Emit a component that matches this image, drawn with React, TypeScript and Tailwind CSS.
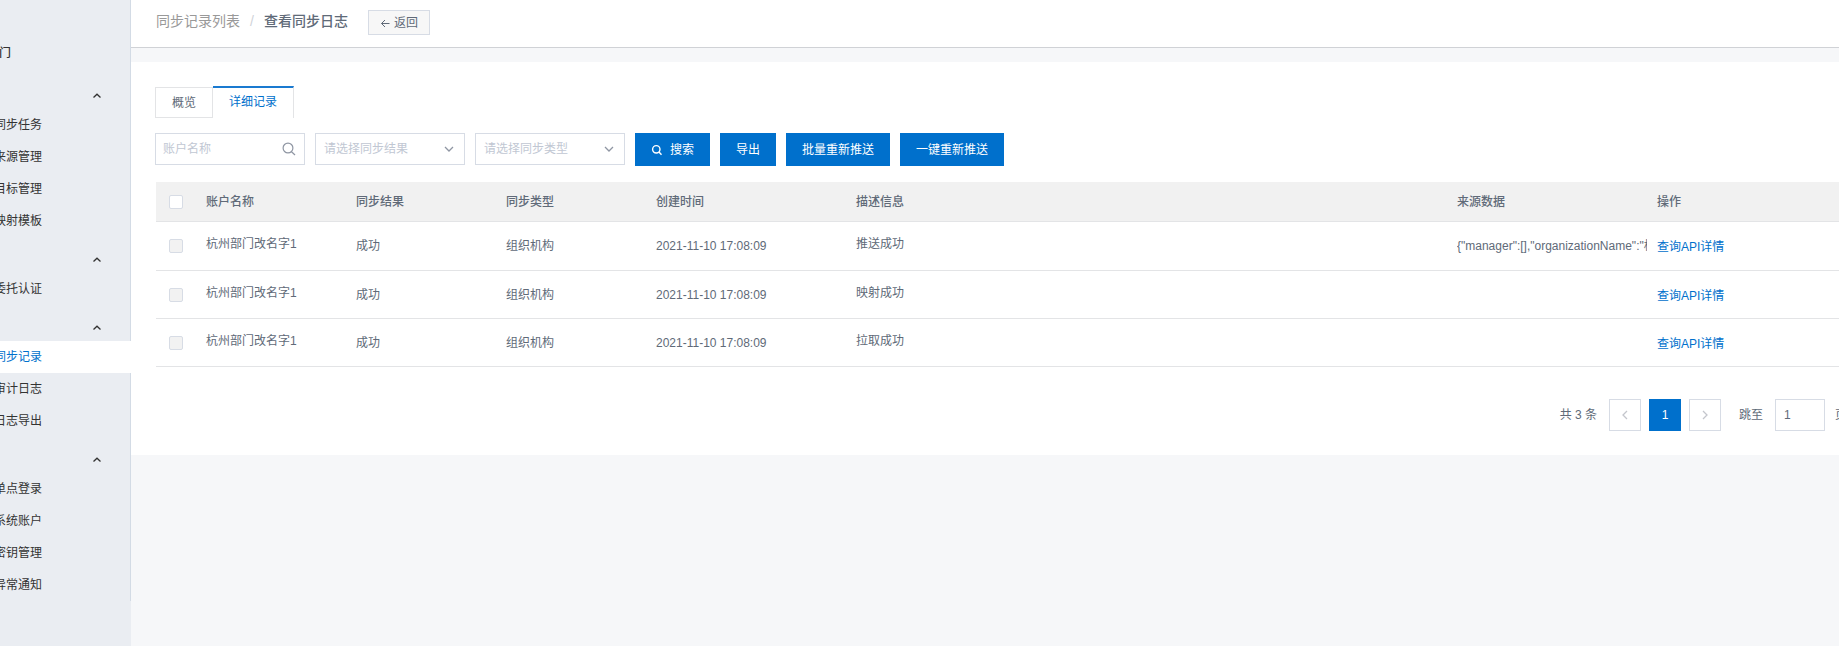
import React from "react";

const groups: { title: string; items: string[] }[] = [
  { title: "同步", items: ["同步任务", "来源管理", "目标管理", "映射模板"] },
  { title: "认证", items: ["委托认证"] },
  { title: "日志", items: ["同步记录", "审计日志", "日志导出"] },
  { title: "设置", items: ["单点登录", "系统账户", "密钥管理", "异常通知"] },
];

const rows = [
  { name: "杭州部门改名字1", desc: "推送成功", data: '{"manager":[],"organizationName":"杭州部门改名字1"}' },
  { name: "杭州部门改名字1", desc: "映射成功", data: "" },
  { name: "杭州部门改名字1", desc: "拉取成功", data: "" },
];

const primary = "flex h-[33px] items-center bg-[#0070cc] px-4 text-white";
const pager = "flex size-8 items-center justify-center border border-[#d7dce5] text-[#c4c6cc]";

function Chevron({ d, className }: { d: string; className: string }) {
  return (
    <svg viewBox="0 0 10 10" fill="none" stroke="currentColor" className={className} aria-hidden="true">
      <path d={d} />
    </svg>
  );
}

function Sidebar() {
  return (
    <aside className="w-[131px] shrink-0 overflow-hidden bg-[#eaedf2] text-[#333]">
      <nav className="h-[601px]">
        <div className="flex h-[73px] items-end border-r border-[#d3dbe5] pb-3">
          <a href="#" className="-ml-[13px] font-medium">部门</a>
        </div>
        {groups.map((g) => (
          <section key={g.title}>
            <button
              aria-label={g.title}
              className="flex h-9 w-full items-center justify-end border-r border-[#d3dbe5] pt-2.5 pr-7"
            >
              <Chevron d="M1.5 6.5 L5 3.2 L8.5 6.5" className="size-2.5 stroke-[1.3]" />
            </button>
            {g.items.map((t) => (
              <a
                key={t}
                href="#"
                className={
                  t === "同步记录"
                    ? "flex h-8 items-center bg-white text-[#0070cc]"
                    : "flex h-8 items-center border-r border-[#d3dbe5]"
                }
              >
                <span className="-ml-1.5">{t}</span>
              </a>
            ))}
          </section>
        ))}
      </nav>
    </aside>
  );
}

function Select({ label }: { label: string }) {
  return (
    <div className="relative w-[150px]">
      <select
        aria-label={label}
        className="h-8 w-full appearance-none border border-[#d7dce5] bg-white px-2 text-[#c1c7d3]"
      >
        <option>{label}</option>
      </select>
      <Chevron
        d="M1 3 L5 7 L9 3"
        className="pointer-events-none absolute top-[11px] right-[11px] size-2.5 stroke-[1.3] text-[#8f96a3]"
      />
    </div>
  );
}

export default function App() {
  return (
    <div className="flex min-h-screen overflow-hidden bg-[#f6f7f9] font-['Liberation_Sans','Noto_Sans_CJK_SC',sans-serif] text-xs text-[#606a78]">
      <Sidebar />
      <div className="min-w-0 flex-1">
        <header className="flex h-12 items-start border-b border-[#d0d2d6] bg-white pt-2.5 pl-[25px]">
          <div className="flex h-[22px] items-center text-sm leading-[22px]">
            <a href="#" className="text-[#999]">同步记录列表</a>
            <span className="px-2.5 text-[#d0d3d9]">/</span>
            <span className="font-medium">查看同步日志</span>
          </div>
          <button className="ml-5 flex h-[25px] items-center gap-1 border border-[#d7dce5] bg-[#f7f7f7] px-[11px]">
            <svg viewBox="0 0 10 10" fill="none" stroke="currentColor" className="size-2.5" aria-hidden="true">
              <path d="M9.5 5.5 H1.5 M5 2 L1.5 5.5 L5 9" />
            </svg>
            返回
          </button>
        </header>

        <main className="mt-3.5 bg-white pt-6 pb-6 pl-6">
          <div role="tablist" className="flex items-end">
            <button role="tab" aria-selected="false" className="h-[31px] border border-[#e3e4e6] px-4">
              概览
            </button>
            <button
              role="tab"
              aria-selected="true"
              className="h-8 border-t-2 border-r border-t-[#1a7ad0] border-r-[#e3e4e6] px-4 pb-0.5 text-[#0070cc]"
            >
              详细记录
            </button>
          </div>

          <form className="mt-[15px] flex gap-2.5">
            <div className="relative w-[150px]">
              <input
                aria-label="账户名称"
                placeholder="账户名称"
                className="h-8 w-full border border-[#d7dce5] px-[7px] placeholder:text-[#c1c7d3]"
              />
              <svg
                viewBox="0 0 14 14"
                fill="none"
                stroke="currentColor"
                className="absolute top-[9px] right-[9px] size-3.5 stroke-[1.2] text-[#8f96a3]"
                aria-hidden="true"
              >
                <circle cx="6" cy="6" r="4.9" />
                <path d="M9.5 9.7 L13 13" />
              </svg>
            </div>
            <Select label="请选择同步结果" />
            <Select label="请选择同步类型" />
            <button type="button" className={primary}>
              <svg
                viewBox="0 0 12 12"
                fill="none"
                stroke="currentColor"
                className="mr-[7px] size-3 stroke-[1.4]"
                aria-hidden="true"
              >
                <circle cx="5.3" cy="5.3" r="3.7" />
                <path d="M8 8 L10.5 10.8" />
              </svg>
              搜索
            </button>
            <button type="button" className={primary}>导出</button>
            <button type="button" className={primary}>批量重新推送</button>
            <button type="button" className={primary}>一键重新推送</button>
          </form>

          <div className="mt-4 ml-px">
            <table className="w-full table-fixed border-separate border-spacing-0 text-left [&_td]:border-b [&_td]:border-[#e3e4e6] [&_td]:p-0 [&_th]:border-b [&_th]:border-[#e3e4e6] [&_th]:p-0 [&_th]:font-medium">
              <colgroup>
                <col className="w-[50px]" />
                <col className="w-[150px]" />
                <col className="w-[150px]" />
                <col className="w-[150px]" />
                <col className="w-[200px]" />
                <col />
                <col className="w-[200px]" />
                <col className="w-[182px]" />
              </colgroup>
              <thead>
                <tr className="h-10 bg-[#f1f1f1]">
                  <th>
                    <input
                      type="checkbox"
                      aria-label="全选"
                      className="ml-[13px] block size-3.5 appearance-none rounded-xs border border-[#d7dce5] bg-white"
                    />
                  </th>
                  <th>账户名称</th>
                  <th>同步结果</th>
                  <th>同步类型</th>
                  <th>创建时间</th>
                  <th>描述信息</th>
                  <th>来源数据</th>
                  <th>操作</th>
                </tr>
              </thead>
              <tbody>
                {rows.map((r) => (
                  <tr key={r.desc} className="h-12 first:h-[49px]">
                    <td>
                      <input
                        type="checkbox"
                        disabled
                        aria-label={r.desc}
                        className="ml-[13px] block size-3.5 appearance-none rounded-xs border border-[#d7dce5] bg-[#f2f2f2]"
                      />
                    </td>
                    <td>
                      <div className="pb-1">{r.name}</div>
                    </td>
                    <td>成功</td>
                    <td>组织机构</td>
                    <td>2021-11-10 17:08:09</td>
                    <td>
                      <div className="pb-1">{r.desc}</div>
                    </td>
                    <td>
                      <div className="mr-2.5 overflow-hidden whitespace-nowrap">{r.data}</div>
                    </td>
                    <td>
                      <a href="#" className="block pt-0.5 text-[#0070cc]">查询API详情</a>
                    </td>
                  </tr>
                ))}
              </tbody>
            </table>
          </div>

          <div className="mt-8 -mr-2 flex items-center justify-end">
            <span className="mr-3">共 3 条</span>
            <button aria-label="上一页" className={pager}>
              <Chevron d="M7 1 L3 5 L7 9" className="size-2.5 stroke-[1.3]" />
            </button>
            <button className="mx-2 size-8 bg-[#0070cc] text-white">1</button>
            <button aria-label="下一页" className={pager}>
              <Chevron d="M3 1 L7 5 L3 9" className="size-2.5 stroke-[1.3]" />
            </button>
            <label className="ml-[18px] flex items-center">
              跳至
              <input defaultValue="1" className="mr-2.5 ml-3 h-8 w-[50px] border border-[#d7dce5] px-2" />
            </label>
            <span>页</span>
          </div>
        </main>
      </div>
    </div>
  );
}
